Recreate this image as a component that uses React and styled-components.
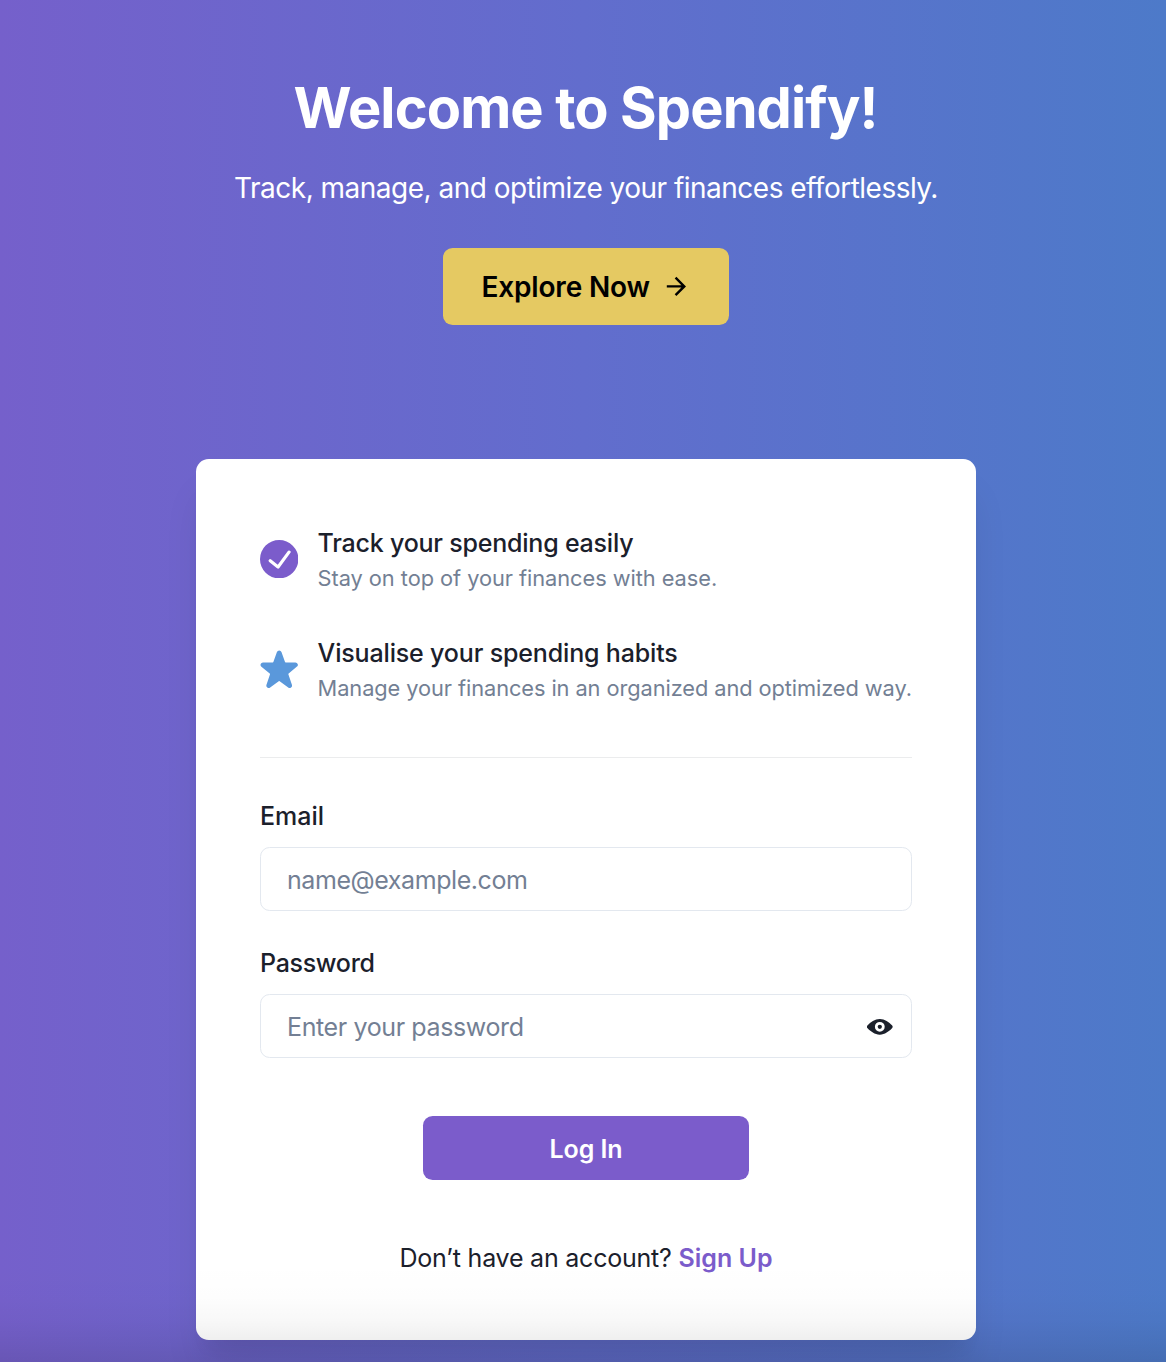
import React, { useState } from 'react';
import styled, { createGlobalStyle } from 'styled-components';

const GlobalStyle = createGlobalStyle`
  *, *::before, *::after { box-sizing: border-box; }
  body {
    margin: 0;
    font-family: Inter, "Liberation Sans", sans-serif;
    color: #1b202b;
  }
`;

const Page = styled.div`
  position: relative;
  display: flex;
  flex-direction: column;
  align-items: center;
  height: 1362px;
  padding: 73px 0 0 6px;
  overflow: hidden;
  background: linear-gradient(to right, #7560cb 0%, #626dcd 50%, #4d7ac9 100%);

  &::after {
    content: '';
    position: absolute;
    inset: auto 0 0 0;
    height: 100px;
    pointer-events: none;
    background: linear-gradient(
      to bottom,
      rgba(0, 0, 0, 0) 0%,
      rgba(0, 0, 0, 0.008) 35%,
      rgba(0, 0, 0, 0.027) 58%,
      rgba(0, 0, 0, 0.062) 78%,
      rgba(0, 0, 0, 0.11) 100%
    );
  }
`;

const Hero = styled.header`
  display: flex;
  flex-direction: column;
  align-items: center;
  color: #fff;
`;

const Title = styled.h1`
  margin: 0 1px 0 0;
  font-size: 56px;
  line-height: 70px;
  font-weight: 700;
  letter-spacing: -0.9px;
`;

const Tagline = styled.p`
  margin: 24px 0 0;
  font-size: 28px;
  line-height: 42px;
  letter-spacing: -0.51px;
`;

const Button = styled.button`
  display: flex;
  align-items: center;
  justify-content: center;
  border: 0;
  border-radius: 9.6px;
  font-family: inherit;
  font-weight: 600;
  cursor: pointer;
`;

const ExploreButton = styled(Button)`
  gap: 12px;
  width: 286px;
  height: 76.6px;
  margin-top: 39.2px;
  background: #e5c962;
  color: #000;
  font-size: 28px;
  letter-spacing: -0.17px;
`;

const ButtonText = styled.span`
  padding-top: 2px;
`;

const Card = styled.main`
  display: flex;
  flex-direction: column;
  width: 780px;
  height: 881px;
  margin-top: 134.2px;
  padding: 64px;
  border-radius: 12.8px;
  background: #fff;
  box-shadow: 0 32px 40px -8px rgba(0, 0, 0, 0.1), 0 16px 16px -8px rgba(0, 0, 0, 0.04);
`;

const Features = styled.div`
  display: flex;
  flex-direction: column;
  gap: 38.4px;
  padding-bottom: 51.2px;
  border-bottom: 1px solid #ebeced;
`;

const Feature = styled.div`
  display: flex;
  align-items: center;
  gap: 19.2px;
  white-space: nowrap;
`;

const FeatureTitle = styled.div`
  font-size: 25px;
  line-height: 41px;
  font-weight: 500;
  letter-spacing: ${(p) => p.$tracking}px;
`;

const FeatureText = styled.div`
  padding-bottom: 1.9px;
  color: #737f94;
  font-size: 21.8px;
  line-height: 29.1px;
  letter-spacing: ${(p) => p.$tracking}px;
`;

const Glyph = styled.svg`
  flex: none;
  display: block;
  width: ${(p) => p.$size}px;
  height: ${(p) => p.$size}px;
  fill: ${(p) => p.$color || 'currentColor'};
`;

const Form = styled.form`
  display: flex;
  flex-direction: column;
  padding-top: 39px;
`;

const Field = styled.div`
  display: flex;
  flex-direction: column;
  gap: 12px;
  margin-bottom: 32.6px;
`;

const Label = styled.label`
  font-size: 25px;
  line-height: 38.4px;
  font-weight: 500;
  letter-spacing: ${(p) => p.$tracking || 0}px;
`;

const InputBox = styled.div`
  display: flex;
  align-items: center;
  height: 64px;
  padding: 0 18px 0 26px;
  border: 1px solid #e3e8ef;
  border-radius: 9.6px;
`;

const Input = styled.input`
  flex: 1;
  min-width: 0;
  height: 60px;
  padding: 2px 0 0;
  border: 0;
  outline: 0;
  background: transparent;
  color: inherit;
  font-family: inherit;
  font-size: 25px;
  letter-spacing: ${(p) => p.$tracking}px;

  &::placeholder {
    color: #737f94;
    opacity: 1;
  }
`;

const IconButton = styled.button`
  display: flex;
  padding: 1.4px 0 0;
  border: 0;
  background: none;
  color: inherit;
  cursor: pointer;
`;

const LoginButton = styled(Button)`
  align-self: center;
  width: 326px;
  height: 64px;
  margin-top: 25.4px;
  background: #7b5ccb;
  color: #fff;
  font-size: 25px;
  letter-spacing: -0.1px;
`;

const SignUpLine = styled.p`
  margin: 59.2px 0 0;
  text-align: center;
  font-size: 25px;
  line-height: 38.4px;
  letter-spacing: -0.22px;
`;

const SignUpLink = styled.a`
  color: #7b5ccb;
  font-weight: 600;
  letter-spacing: 0;
  text-decoration: none;
`;

const ArrowIcon = () => (
  <Glyph viewBox="0 0 24 24" $size={28.8}>
    <path d="M12 4l-1.41 1.41L16.17 11H4v2h12.17l-5.58 5.59L12 20l8-8z" />
  </Glyph>
);

const CheckIcon = () => (
  <Glyph viewBox="0 0 24 24" $size={38.4} $color="#7b5ccb">
    <path d="M12,0A12,12,0,1,0,24,12,12.014,12.014,0,0,0,12,0Zm6.927,8.2-6.845,9.289a1.011,1.011,0,0,1-1.43.188L5.764,13.769a1,1,0,1,1,1.25-1.562l4.076,3.261,6.227-8.451A1,1,0,1,1,18.927,8.2Z" />
  </Glyph>
);

const StarIcon = () => (
  <Glyph viewBox="0 0 24 24" $size={38.4} $color="#5a98db">
    <path d="M23.555,8.729a1.505,1.505,0,0,0-1.406-.98H16.062a.5.5,0,0,1-.472-.334L13.405,1.222a1.5,1.5,0,0,0-2.81,0l-.005.016L8.41,7.415a.5.5,0,0,1-.471.334H1.85A1.5,1.5,0,0,0,.887,10.4l5.184,4.3a.5.5,0,0,1,.155.543L4.048,21.774a1.5,1.5,0,0,0,2.31,1.684l5.346-3.92a.5.5,0,0,1,.591,0l5.344,3.919a1.5,1.5,0,0,0,2.312-1.683l-2.178-6.535a.5.5,0,0,1,.155-.543l5.194-4.306A1.5,1.5,0,0,0,23.555,8.729Z" />
  </Glyph>
);

const EyeIcon = () => (
  <Glyph viewBox="0 0 24 24" $size={25.6}>
    <path d="M23.432,10.524C20.787,7.614,16.4,4.538,12,4.6,7.6,4.537,3.213,7.615.568,10.524a2.211,2.211,0,0,0,0,2.948C3.182,16.351,7.507,19.4,11.839,19.4h.308c4.347,0,8.671-3.049,11.288-5.929A2.21,2.21,0,0,0,23.432,10.524ZM7.4,12A4.6,4.6,0,1,1,12,16.6,4.6,4.6,0,0,1,7.4,12Z" />
    <circle cx="12" cy="12" r="2" />
  </Glyph>
);

export default function App() {
  const [visible, setVisible] = useState(false);
  return (
    <>
      <GlobalStyle />
      <Page>
        <Hero>
          <Title>Welcome to Spendify!</Title>
          <Tagline>Track, manage, and optimize your finances effortlessly.</Tagline>
          <ExploreButton>
            <ButtonText>Explore Now</ButtonText>
            <ArrowIcon />
          </ExploreButton>
        </Hero>
        <Card>
          <Features>
            <Feature>
              <CheckIcon />
              <div>
                <FeatureTitle $tracking={-0.22}>Track your spending easily</FeatureTitle>
                <FeatureText $tracking={-0.05}>Stay on top of your finances with ease.</FeatureText>
              </div>
            </Feature>
            <Feature>
              <StarIcon />
              <div>
                <FeatureTitle $tracking={-0.16}>Visualise your spending habits</FeatureTitle>
                <FeatureText $tracking={-0.08}>Manage your finances in an organized and optimized way.</FeatureText>
              </div>
            </Feature>
          </Features>
          <Form onSubmit={(e) => e.preventDefault()}>
            <Field>
              <Label htmlFor="email">Email</Label>
              <InputBox>
                <Input id="email" type="email" placeholder="name@example.com" $tracking={-0.43} />
              </InputBox>
            </Field>
            <Field>
              <Label htmlFor="password" $tracking={-0.3}>Password</Label>
              <InputBox>
                <Input
                  id="password"
                  type={visible ? 'text' : 'password'}
                  placeholder="Enter your password"
                  $tracking={-0.38}
                />
                <IconButton type="button" onClick={() => setVisible(!visible)}>
                  <EyeIcon />
                </IconButton>
              </InputBox>
            </Field>
            <LoginButton type="submit">
              <ButtonText>Log In</ButtonText>
            </LoginButton>
          </Form>
          <SignUpLine>
            Don’t have an account? <SignUpLink href="#">Sign Up</SignUpLink>
          </SignUpLine>
        </Card>
      </Page>
    </>
  );
}
